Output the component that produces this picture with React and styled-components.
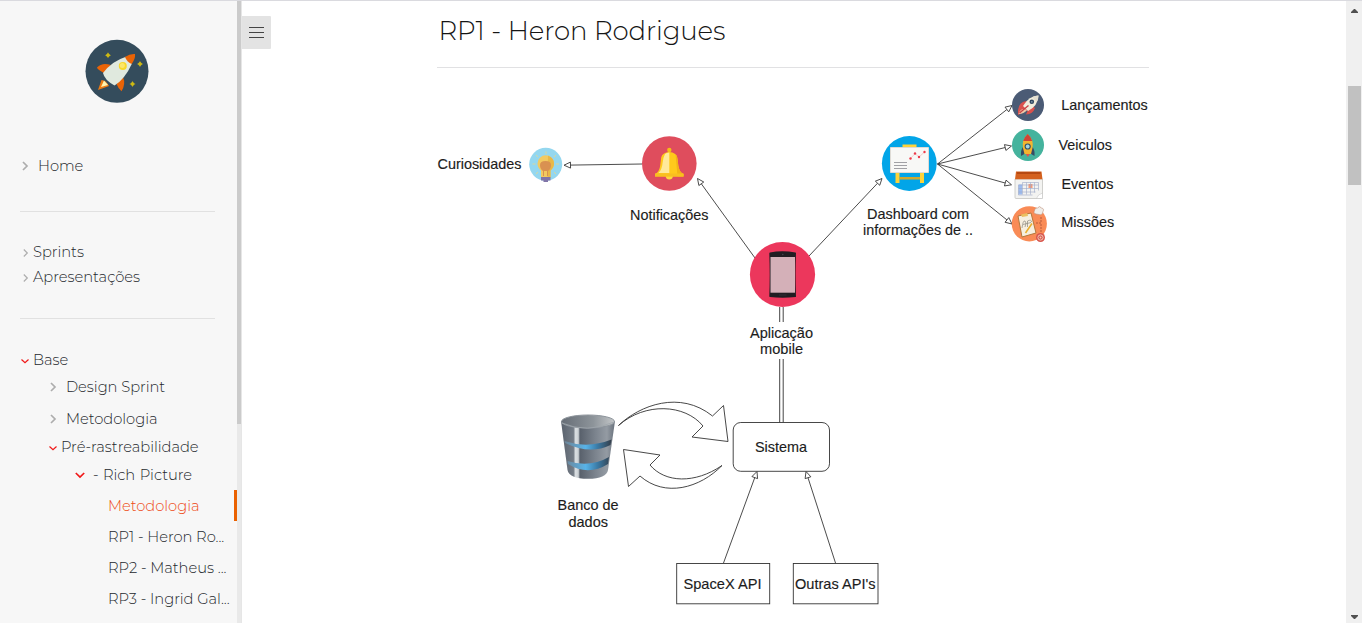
import React from "react";
import styled, { createGlobalStyle } from "styled-components";

const GlobalStyle = createGlobalStyle`
  * { box-sizing: border-box; }
  body { margin: 0; background: #fff; overflow: hidden; }
`;

const Page = styled.div`
  display: flex;
  width: 100%;
  height: 623px;
  overflow: hidden;
  border-top: 1px solid #dadadf;
  font-family: Montserrat, "Open Sans", sans-serif;
  font-weight: 300;
  color: #333;
`;

const Sidebar = styled.aside`
  display: flex;
  flex-direction: column;
  width: 237px;
  flex: none;
  background: #f7f7f7;
`;

const SidebarTrack = styled.div`
  width: 5px;
  flex: none;
  background: #e9e9e9;
  border-right: 1px solid #e6e6e6;
`;

const SidebarThumb = styled.div`
  height: 423px;
  background: #cbcbcb;
`;

const Logo = styled.svg`
  display: block;
  width: 64px;
  height: 64px;
  margin: 38px 0 48px 85px;
  flex: none;
`;

const Divider = styled.hr`
  width: 195px;
  height: 1px;
  flex: none;
  border: 0;
  margin: ${(p) => p.$top}px 0 ${(p) => p.$bottom}px 20px;
  background: #e1e1e1;
`;

const Item = styled.div`
  display: flex;
  align-items: center;
  flex: none;
  height: ${(p) => p.$height}px;
  margin-top: ${(p) => p.$gap || 0}px;
  padding-left: ${(p) => p.$indent}px;
  font-size: 14.7px;
  letter-spacing: -0.03px;
  word-spacing: ${(p) => p.$wordSpacing || 0}px;
  white-space: nowrap;
  color: ${(p) => (p.$active ? "#ee4a14" : "#24272c")};
  border-right: ${(p) => (p.$active ? "3px solid #ea6100" : "0")};
`;

const Chevron = styled.svg`
  display: block;
  flex: none;
  width: 10px;
  height: 10px;
  margin: ${(p) => p.$drop || 0}px ${(p) => p.$space}px 0 0;
  fill: none;
  stroke: ${(p) => (p.$open ? "#f01818" : "#adadad")};
  stroke-width: ${(p) => (p.$bold ? 1.7 : 1.2)};
`;

const Main = styled.main`
  display: flex;
  align-items: flex-start;
  flex: 1;
  min-width: 0;
`;

const MenuButton = styled.button`
  display: flex;
  flex-direction: column;
  align-items: center;
  justify-content: center;
  gap: 4px;
  flex: none;
  width: 29px;
  height: 33px;
  margin: 15px 0 0;
  padding: 0;
  border: 0;
  border-radius: 0 1px 1px 0;
  background: #e3e3e3;
`;

const MenuBar = styled.span`
  width: 15px;
  height: 1px;
  background: #444;
`;

const Article = styled.article`
  width: 712px;
  margin-left: 166px;
`;

const Title = styled.h2`
  height: 67px;
  margin: 0;
  padding: 12px 0 0 1.5px;
  border-bottom: 1px solid #e1e1e3;
  font-size: 26px;
  font-weight: 300;
  line-height: 36px;
  letter-spacing: -0.1px;
  color: #151515;
`;

const Diagram = styled.svg`
  display: block;
  width: 712px;
  height: 555px;
  overflow: visible;
`;

const Label = styled.text`
  font: 400 15px "Liberation Sans", Arial, sans-serif;
  fill: #1c1c1c;
  stroke: #1c1c1c;
  stroke-width: 0.15px;
`;

const Scrollbar = styled.div`
  display: flex;
  flex-direction: column;
  align-items: center;
  width: 16px;
  flex: none;
  padding: 8px 0 4px;
  background: #f0f0f0;
`;

const ScrollThumb = styled.div`
  width: 13px;
  height: 99px;
  margin: 73px 0 auto 1px;
  background: #c1c1c1;
`;

const ScrollArrow = styled.svg`
  display: block;
  width: 7px;
  height: 4px;
  margin-left: 1px;
  fill: #505050;
`;

const Arrow = ({ from, to, size = 6.5 }) => {
  const dx = to[0] - from[0];
  const dy = to[1] - from[1];
  const len = Math.hypot(dx, dy);
  const [ux, uy] = [dx / len, dy / len];
  const bx = to[0] - ux * size;
  const by = to[1] - uy * size;
  const w = 3;
  return (
    <g fill="#fff" stroke="#2c2c2c" strokeWidth=".85">
      <path d={`M${from[0]} ${from[1]}L${bx} ${by}`} />
      <path d={`M${to[0]} ${to[1]}L${bx - uy * w} ${by + ux * w}L${bx + uy * w} ${by - ux * w}Z`} />
    </g>
  );
};

const Fit = ({ x, y, w, children }) => (
  <Label x={x} y={y} textLength={w} lengthAdjust="spacingAndGlyphs">{children}</Label>
);

const Star = ({ x, y }) => (
  <g fill="#cdb914">
    <path d={`M${x} ${y - 3}L${x + 1} ${y - 1}L${x + 3} ${y}L${x + 1} ${y + 1}L${x} ${y + 3}L${x - 1} ${y + 1}L${x - 3} ${y}L${x - 1} ${y - 1}Z`} />
    <circle cx={x} cy={y} r="1.7" />
  </g>
);

const RocketLogo = () => (
  <Logo viewBox="85 39 64 64">
    <circle cx="117" cy="71.3" r="31.5" fill="#344c5c" />
    <Star x={108} y={55.3} />
    <Star x={140} y={64} />
    <Star x={132.5} y={84} />
    <path d="M97 67.5Q102 62 111 65L104 73Q97 69 97 67.5Z" fill="#e96306" />
    <path d="M123 77Q126 84 121.500 91.300Q118.500 89 116.500 84Z" fill="#e96306" />
    <path d="M98 90L101.500 80Q106 80 109 86Z" fill="#ee7b12" />
    <path d="M101 87L104 80.500L108 85Z" fill="#fff4b0" />
    <path d="M103 73Q112 61 126 56.700L132 63.500Q125 79 114.500 85.500Q104.500 80 103 73Z" fill="#e0e9de" />
    <path d="M125 57Q130 53.500 135 54Q135.500 59 131.500 64Q127 62 125 57Z" fill="#e96306" />
    <circle cx="122.800" cy="66" r="4" fill="#f8d829" />
    <circle cx="122.300" cy="65.500" r="2.500" fill="#fce66a" />
  </Logo>
);

const Right = (p) => (
  <Chevron viewBox="0 0 10 10" {...p}><path d={p.$bold ? "M3 1L7 5L3 9" : "M3.800 1.500L7.300 5L3.800 8.500"} /></Chevron>
);
const Down = (p) => (
  <Chevron viewBox="0 0 10 10" $open {...p}><path d={p.$bold ? "M.8 3L5 7L9.200 3" : "M1.500 3.500L5 6.800L8.500 3.500"} /></Chevron>
);

const BulbIcon = () => (
  <g>
    <circle cx="545.700" cy="164.300" r="16.500" fill="#94d7ef" />
    <g stroke="#d8d89c" strokeWidth="1">
      <path d="M546 151.500v2.500M536 155l2 2M556 155l-2 2M532.500 164h3M556 164h3M536 174l2-2M556 174l-2-2" />
    </g>
    <path d="M537.500 163.500a8.200 8.200 0 0 1 16.500 0q0 4-3.500 7v7h-9.500v-7q-3.500-3-3.500-7Z" fill="#f2ca60" />
    <path d="M548 155.800q6 2 6 7.700q0 4-3.500 7v7h-3Z" fill="#e8b847" />
    <path d="M540 165q0-4 5.500-4t5.500 4q0 4-3 6v5h-1v-5h-3v5h-1v-5q-3-2-3-6Z" fill="#d99151" />
    <path d="M541 177h9.500v3.500h-2.500v1.500h-4.500v-1.500H541Z" fill="#8175a8" />
  </g>
);

const BellIcon = () => (
  <g>
    <circle cx="669.300" cy="163.500" r="27.300" fill="#df4d5d" />
    <circle cx="669.300" cy="150" r="2.200" fill="#f6bc16" />
    <path d="M665.500 175h7.500q0 4.500-3.700 4.500t-3.800-4.500Z" fill="#ffd83d" />
    <path d="M655 176.500v-2.500q4.500-2 5.200-8.500l1-8q1-5 8.100-5.500q7 .5 8 5.500l1 8q.8 6.500 5.200 8.500v2.500Z" fill="#ffc91c" />
    <path d="M658.500 173q3.500-3.500 4-9.500t2.500-9.500q1.500-1.500 4.300-1.500V173Z" fill="#ffe99b" />
    <path d="M675.500 154q2 2 2.800 11.500q.8 6.500 5.200 8.500v2.500h-6Z" fill="#f3b316" />
    <path d="M655 173.500h28.500v3H655Z" fill="#f9bf20" />
  </g>
);

const BoardIcon = () => (
  <g>
    <circle cx="909.300" cy="163.500" r="27.400" fill="#02a5e8" />
    <path d="M902.500 144.500h14v4h-14ZM895.500 172h4v11h-4ZM920 172h4v11h-4Z" fill="#fdd33a" />
    <path d="M899.500 177h20.500v2.500h-20.500Z" fill="#d1a92f" />
    <path d="M890.500 147.500h38v25h-38Z" fill="#f8f8f6" stroke="#dedbd5" />
    <path d="M894 162.500h13M894 165.500h13M894 168.500h13" stroke="#8a8a90" strokeWidth=".8" />
    <path d="M910.500 158.500L915 153.500L919 157L924.500 152" fill="none" stroke="#eeb0b0" strokeWidth=".6" />
    <g fill="#ed3a49"><circle cx="910.500" cy="158.500" r="1.200" /><circle cx="915" cy="153.500" r="1.200" /><circle cx="919" cy="157" r="1.200" /><circle cx="924.500" cy="152" r="1.200" /></g>
  </g>
);

const LaunchIcon = () => (
  <g>
    <circle cx="1028" cy="105" r="16" fill="#4b5b75" />
    <path d="M1018 110Q1019 102 1026 101L1035 108Q1033 114 1026 114.500L1028 110L1018 115Z" fill="#d9514d" />
    <path d="M1018.500 114Q1021 107 1027 110Q1024 114 1018.500 114Z" fill="#efc9a9" />
    <path d="M1038.500 95.500Q1029 95.500 1023 106L1028 111Q1038 106 1038.500 95.500Z" fill="#f1eddc" />
    <path d="M1038.500 95.500Q1035 95.500 1032.500 97Q1034 100 1037 101.500Q1038.500 99 1038.500 95.500Z" fill="#e3ded0" />
    <circle cx="1031.800" cy="101.800" r="2.300" fill="#2f465f" />
    <circle cx="1031.800" cy="101.800" r=".9" fill="#7d98aa" />
    <path d="M1019.500 113L1028.500 105.500" stroke="#ca3f43" strokeWidth="1.300" />
  </g>
);

const VehicleIcon = () => (
  <g>
    <circle cx="1028" cy="145" r="16" fill="#45b39d" />
    <path d="M1023 147Q1020.500 150 1021 156L1026 153ZM1032.500 147Q1035 150 1034.500 156L1029.500 153Z" fill="#354b64" />
    <path d="M1025 153h5.500l-2.700 4Z" fill="#e2574c" />
    <path d="M1027.700 134Q1034 140 1032.500 148L1031 154h-6.500L1023 148Q1021.500 140 1027.700 134Z" fill="#f3b52f" />
    <path d="M1027.700 134q3.500 3 4.500 7h-9q1-4 4.500-7Z" fill="#cf4436" />
    <circle cx="1027.700" cy="146.500" r="3.100" fill="#31536b" /><circle cx="1027.700" cy="146.500" r="1.900" fill="#a4d4e0" />
  </g>
);

const CalendarIcon = () => (
  <g>
    <path d="M1015 179h27.500v18.500q0 1-1 1h-25.500q-1 0-1-1Z" fill="#f3f3f1" stroke="#bdbdb9" strokeWidth=".7" />
    <path d="M1016 171.500h25.500l1 7.700h-27.500Z" fill="#d4611e" />
    <path d="M1017 172h23.500v2h-23.500Z" fill="#b64911" />
    <path d="M1018.500 184.500h3.500v10h-3.500Z" fill="#9dbcf0" />
    <path d="M1028.500 184h4v4h-4Z" fill="#f39b7a" />
    <path d="M1022.500 182.500h16M1018.500 185h20M1018.500 188.500h20M1018.500 192h17M1018.500 195h14M1018.500 185v10M1022.500 182.500v12M1026.500 182.500v12M1030.500 182.500v12M1034.500 182.500v10M1038.500 182.500v8" stroke="#9daac8" strokeWidth=".6" fill="none" />
    <path d="M1036.500 198.500q1-4 6-5.500v5.500Z" fill="#fff" stroke="#bbb" strokeWidth=".5" />
  </g>
);

const MissionIcon = () => (
  <g>
    <circle cx="1029.300" cy="223.800" r="17.600" fill="#f98b56" />
    <path d="M1036 214q-3-.5-1.500-3.500q0-3 3-2.500q2-2.800 4 0q3 .5 1.500 3.500q-.5 4-4 3Z" fill="#f0eeea" stroke="#bd8e78" strokeWidth=".6" />
    <path d="M1041 217v6h-5M1041 224v9" fill="none" stroke="#b75a3c" strokeDasharray="2 1" />
    <path d="M1018 216L1031 213L1036 233L1022 237Z" fill="#f6efe0" stroke="#b4773b" strokeWidth="1" />
    <path d="M1021 214.500l6-1.500 1 3-6 1Z" fill="#ebbf5f" />
    <path d="M1022 228q1-8 3-7t0 6M1023 224.500l8-2M1027.500 227v-6q4-2 4 1" fill="none" stroke="#8b8980" strokeWidth=".7" />
    <path d="M1025.500 233L1032 223.500" stroke="#e9ae2e" strokeWidth="1.500" />
    <circle cx="1040.500" cy="237.500" r="4.500" fill="#d8564d" /><circle cx="1040.500" cy="237.500" r="2.600" fill="none" stroke="#f2c5b6" /><circle cx="1040.500" cy="237.500" r="1" fill="#f2c5b6" />
  </g>
);

const PhoneIcon = () => (
  <g>
    <circle cx="782.500" cy="274.500" r="32.600" fill="#ec375c" />
    <path d="M770 252.500q12-2.500 25.500 0q.5 0 .5 1q-1 20 0 43q0 .5-.5.500q-13 1.500-25.500 0q-.8 0-.7-.5q.8-22 0-43q0-1 .7-1Z" fill="#211d22" />
    <path d="M770.500 257h24.500v35.700h-24.500Z" fill="#d4b0b8" />
    <circle cx="782.800" cy="254.500" r=".7" fill="#4e4951" />
    <path d="M779 295h7.500" stroke="#3a353c" strokeWidth=".7" />
  </g>
);

const DatabaseIcon = () => (
  <g>
    <defs>
      <linearGradient id="steel">
        <stop offset="0" stopColor="#5a626d" /><stop offset=".23" stopColor="#747c86" /><stop offset=".27" stopColor="#dce0e3" /><stop offset=".32" stopColor="#cbd0d4" /><stop offset=".35" stopColor="#59616c" /><stop offset=".65" stopColor="#7d858f" /><stop offset=".85" stopColor="#949ba3" /><stop offset="1" stopColor="#68717c" />
      </linearGradient>
      <linearGradient id="glow"><stop offset="0" stopColor="#6e8496" /><stop offset=".45" stopColor="#58b3e8" /><stop offset=".7" stopColor="#3b7ba6" /><stop offset="1" stopColor="#333d49" /></linearGradient>
      <linearGradient id="lid"><stop offset="0" stopColor="#666d76" /><stop offset=".6" stopColor="#8d949a" /><stop offset="1" stopColor="#c4c7c9" /></linearGradient>
    </defs>
    <path d="M561 421L567.500 470Q569 478.800 588 478.800Q606.500 478.800 608 470L615 421Z" fill="url(#steel)" />
    <path d="M564.500 441Q588 449 611.500 439.500L610.500 445Q590 455 565 443ZM567.500 461Q590 468 609 457L608 464Q588 476.500 568 464Z" fill="url(#glow)" />
    <ellipse cx="588" cy="421.500" rx="26.500" ry="6.500" fill="url(#lid)" stroke="#8d949b" strokeWidth="1" />
    <path d="M562 423Q587 434 614 422" fill="none" stroke="#a0a7ad" strokeWidth=".8" />
  </g>
);

const RichPicture = () => (
  <Diagram viewBox="437 68 712 555">
    <Arrow from={[642, 164]} to={[564, 165.200]} />
    <Arrow from={[755, 258]} to={[697.500, 178.500]} />
    <Arrow from={[809, 256]} to={[882, 178.500]} />
    <Arrow from={[937.500, 164]} to={[1012, 105.500]} />
    <Arrow from={[937.500, 164]} to={[1011.500, 146]} />
    <Arrow from={[937.500, 164]} to={[1011.500, 184.800]} />
    <Arrow from={[937.500, 164]} to={[1012, 224]} />
    <Arrow from={[723.500, 563]} to={[757, 471.500]} />
    <Arrow from={[835.500, 563]} to={[806, 471.500]} />
    <path d="M779.700 307v15M783.200 307v15M779.700 359v63.500M783.200 359v63.500" stroke="#444" strokeWidth="1" />
    <g fill="#fff" stroke="#333" strokeWidth=".9">
      <path d="M618.500 425.500C640 405 680 390 712.500 416L723.500 405.500L728 441.500L692 437L703 426C685 404 645 402 618.500 425.500Z" />
      <path d="M722 465.500C700 488 665 498 640 476L628.500 486.500L623.500 449.500L660 455L650 465C665 483 695 484 722 465.500Z" />
      <rect x="733.200" y="422.500" width="96.300" height="48.800" rx="7.500" />
      <rect x="676.700" y="563.500" width="93" height="40.300" />
      <rect x="793.300" y="563.500" width="84.700" height="40.300" />
    </g>
    <BulbIcon />
    <BellIcon />
    <BoardIcon />
    <LaunchIcon />
    <VehicleIcon />
    <CalendarIcon />
    <MissionIcon />
    <PhoneIcon />
    <DatabaseIcon />
    <Fit x={437.500} y={168.600} w={84}>Curiosidades</Fit>
    <Fit x={630} y={220} w={78.500}>Notificações</Fit>
    <Fit x={867} y={218.600} w={102}>Dashboard com</Fit>
    <Fit x={863} y={235.400} w={110}>informações de ..</Fit>
    <Fit x={1061.200} y={110} w={86.500}>Lançamentos</Fit>
    <Fit x={1058.500} y={150} w={53.500}>Veiculos</Fit>
    <Fit x={1061.500} y={188.600} w={52}>Eventos</Fit>
    <Fit x={1061.200} y={227.400} w={53}>Missões</Fit>
    <Fit x={750} y={337.600} w={63}>Aplicação</Fit>
    <Fit x={760} y={354.400} w={43}>mobile</Fit>
    <Fit x={755} y={452.400} w={52}>Sistema</Fit>
    <Fit x={557.500} y={510.400} w={61}>Banco de</Fit>
    <Fit x={568.500} y={527.400} w={39.500}>dados</Fit>
    <Fit x={683.500} y={589} w={78}>SpaceX API</Fit>
    <Fit x={795} y={589} w={80.500}>Outras API's</Fit>
  </Diagram>
);

export default function App() {
  return (
    <>
      <GlobalStyle />
      <Page>
        <Sidebar>
          <RocketLogo />
          <Item $height={30} $indent={20}><Right $bold $space={8} />Home</Item>
          <Divider $top={30} $bottom={27} />
          <Item $height={25} $indent={20}><Right $space={3} $drop={3} />Sprints</Item>
          <Item $height={25} $indent={20}><Right $space={3} $drop={3} />Apresentações</Item>
          <Divider $top={29} $bottom={28} />
          <Item $height={26} $indent={20}><Down $space={3} $drop={2} />Base</Item>
          <Item $height={28} $indent={48}><Right $bold $space={8} />Design Sprint</Item>
          <Item $height={32} $gap={2} $indent={48}><Right $bold $space={8} />Metodologia</Item>
          <Item $height={24} $indent={48}><Down $space={3} $drop={2} />Pré-rastreabilidade</Item>
          <Item $height={30} $gap={1} $indent={75} $wordSpacing={0.7}><Down $bold $space={8} />- Rich Picture</Item>
          <Item $height={31} $indent={108} $active>Metodologia</Item>
          <Item $height={31} $indent={108}>RP1 - Heron Ro...</Item>
          <Item $height={31} $indent={108}>RP2 - Matheus ...</Item>
          <Item $height={31} $indent={108}>RP3 - Ingrid Gal...</Item>
        </Sidebar>
        <SidebarTrack><SidebarThumb /></SidebarTrack>
        <Main>
          <MenuButton aria-label="Menu"><MenuBar /><MenuBar /><MenuBar /></MenuButton>
          <Article>
            <Title>RP1 - Heron Rodrigues</Title>
            <RichPicture />
          </Article>
        </Main>
        <Scrollbar>
          <ScrollArrow viewBox="0 0 7 4"><path d="M3 0h1L7 3v1H0V3Z" /></ScrollArrow>
          <ScrollThumb />
          <ScrollArrow viewBox="0 0 7 4"><path d="M0 0h7v1L4 4H3L0 1Z" /></ScrollArrow>
        </Scrollbar>
      </Page>
    </>
  );
}
